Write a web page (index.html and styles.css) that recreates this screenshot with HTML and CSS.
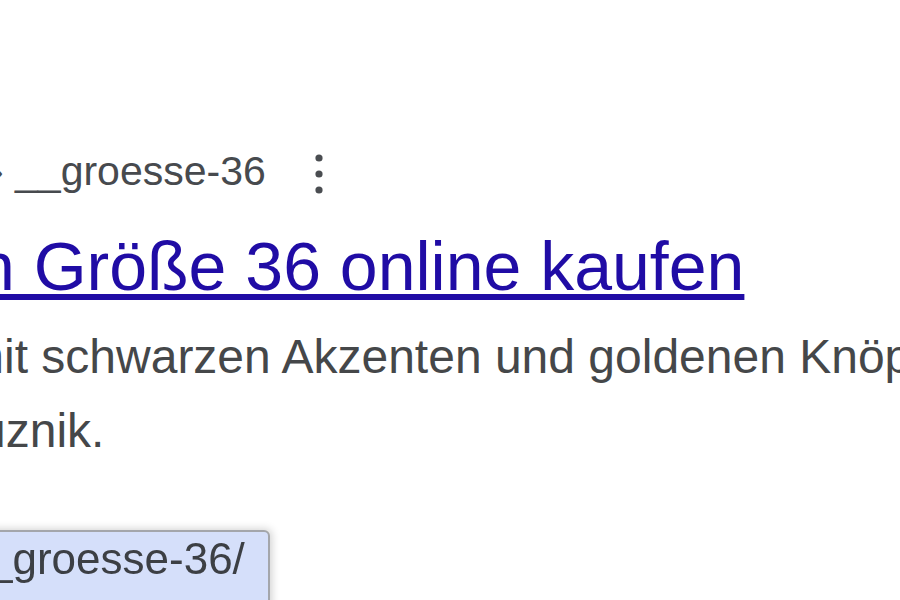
FILE: index.html
```html
<!DOCTYPE html>
<html lang="de">
<head>
<meta charset="utf-8">
<title>Größe 36 online kaufen</title>
<link rel="stylesheet" href="styles.css">
</head>
<body>
<div class="result">
  <div class="crumbs">
    <span class="crumb-text">› __groesse-36</span>
    <span class="more" aria-label="Mehr">
      <svg width="14" height="44" viewBox="0 0 14 44"><circle cx="7" cy="6" r="3.6"/><circle cx="7" cy="22" r="3.6"/><circle cx="7" cy="38" r="3.6"/></svg>
    </span>
  </div>
  <h3 class="title"><a href="#">n Größe 36 online kaufen</a></h3>
  <div class="snippet">
    <div class="line line-1">mit schwarzen Akzenten und goldenen Knöpfen</div>
    <div class="line line-2">uznik.</div>
  </div>
</div>
<div class="status-bubble">_groesse-36/</div>
</body>
</html>
```

FILE: styles.css
```css
html, body {
  margin: 0;
  background: #ffffff;
}
body {
  width: 900px;
  height: 600px;
  overflow: hidden;
  font-family: "Liberation Sans", Arial, sans-serif;
}
.result {
  padding-top: 147px;
}
.crumbs {
  display: flex;
  align-items: flex-start;
  height: 48px;
  margin-left: -10px;
  font-size: 41px;
  line-height: 48px;
  color: #474a4e;
  white-space: nowrap;
}
.more {
  display: flex;
  margin-left: 46px;
  margin-top: 5px;
  fill: #4a4d51;
}
.title {
  margin: 31px 0 0 -23px;
  font-size: 68px;
  line-height: 80px;
  font-weight: normal;
  white-space: nowrap;
}
.title a {
  color: #200ca5;
  text-decoration: underline;
}
.snippet {
  margin-top: 14px;
  font-size: 48px;
  line-height: 74px;
  color: #454749;
  white-space: nowrap;
}
.line-1 {
  margin-left: -36px;
}
.line-2 {
  margin-left: -21px;
}
.status-bubble {
  position: fixed;
  left: -30px;
  top: 530px;
  height: 100px;
  padding: 3px 23px 0 16px;
  box-sizing: border-box;
  background: #d5dffa;
  border: 2px solid #a4a6ab;
  border-top-right-radius: 6px;
  box-shadow: 2px -1px 8px rgba(0, 0, 0, 0.18);
  font-size: 44px;
  line-height: 48px;
  color: #3c3f44;
  white-space: nowrap;
}
```
